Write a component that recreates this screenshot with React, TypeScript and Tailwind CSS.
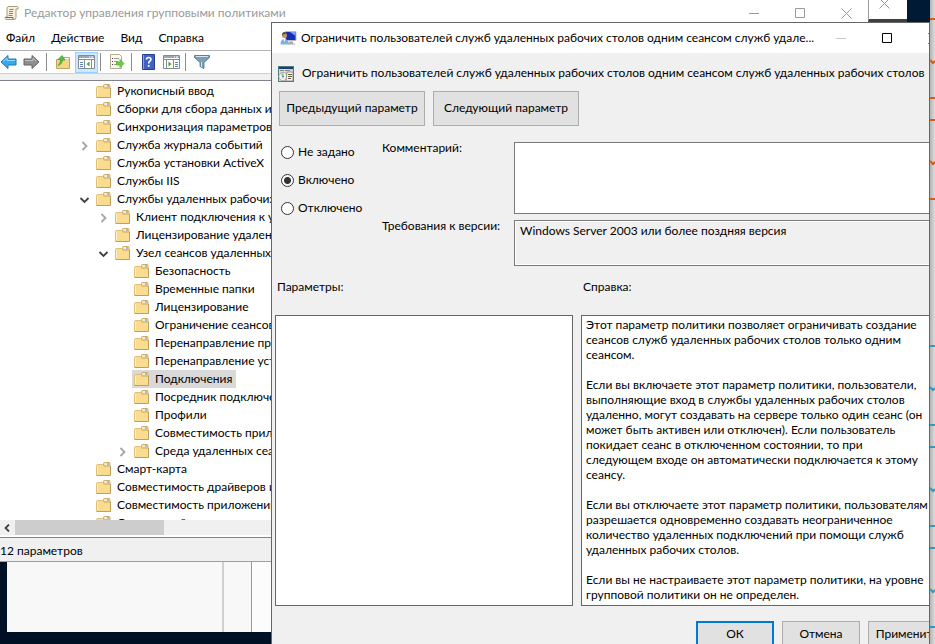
import React from "react";

type Node = {
  label: string;
  depth: 0 | 1 | 2;
  state?: "open" | "closed";
  selected?: boolean;
};

const NODES: Node[] = [
  { label: "Рукописный ввод", depth: 0 },
  { label: "Сборки для сбора данных и", depth: 0 },
  { label: "Синхронизация параметров", depth: 0 },
  { label: "Служба журнала событий", depth: 0, state: "closed" },
  { label: "Служба установки ActiveX", depth: 0 },
  { label: "Службы IIS", depth: 0 },
  { label: "Службы удаленных рабочих", depth: 0, state: "open" },
  { label: "Клиент подключения к у", depth: 1, state: "closed" },
  { label: "Лицензирование удаленных", depth: 1 },
  { label: "Узел сеансов удаленных", depth: 1, state: "open" },
  { label: "Безопасность", depth: 2 },
  { label: "Временные папки", depth: 2 },
  { label: "Лицензирование", depth: 2 },
  { label: "Ограничение сеансов", depth: 2 },
  { label: "Перенаправление принтеров", depth: 2 },
  { label: "Перенаправление устройств", depth: 2 },
  { label: "Подключения", depth: 2, selected: true },
  { label: "Посредник подключений", depth: 2 },
  { label: "Профили", depth: 2 },
  { label: "Совместимость приложений", depth: 2 },
  { label: "Среда удаленных сеансов", depth: 2, state: "closed" },
  { label: "Смарт-карта", depth: 0 },
  { label: "Совместимость драйверов и", depth: 0 },
  { label: "Совместимость приложений", depth: 0 },
  { label: "Совместный доступ к сети", depth: 0 },
];

const INDENT = ["pl-[78px]", "pl-[97px]", "pl-[116px]"];

const HELP_TEXT = `Этот параметр политики позволяет ограничивать создание
сеансов служб удаленных рабочих столов только одним
сеансом.

Если вы включаете этот параметр политики, пользователи,
выполняющие вход в службы удаленных рабочих столов
удаленно, могут создавать на сервере только один сеанс (он
может быть активен или отключен). Если пользователь
покидает сеанс в отключенном состоянии, то при
следующем входе он автоматически подключается к этому
сеансу.

Если вы отключаете этот параметр политики, пользователям
разрешается одновременно создавать неограниченное
количество удаленных подключений при помощи служб
удаленных рабочих столов.

Если вы не настраиваете этот параметр политики, на уровне
групповой политики он не определен.`;

function Folder() {
  return (
    <svg width="15" height="14" viewBox="0 0 15 14" className="shrink-0">
      <path d="M.5 13.500V3.500q0-1 1-1H6.500l1.500 1.500h5.500q1 0 1 1v8.500z" fill="#f9dc90" />
      <path d="M7.500 4V1.500q0-1 1-1h4.500q1 0 1 1V4z" fill="#f3ddab" stroke="#cdaa68" />
      <path d="M9 2h2" stroke="#fff" />
      <path d="M11 2h2" stroke="#5aa0dc" />
      <path d="M.5 13V3.500q0-1 1-1H6.500L8 4h5.500" fill="none" stroke="#e0bf78" />
      <path d="M1.500 12V4" stroke="#fff0c4" />
      <path d="M.5 13.500H14.500V4" fill="none" stroke="#bd9f60" />
    </svg>
  );
}

function Chevron({ state }: { state?: "open" | "closed" }) {
  return (
    <svg width="12" height="12" viewBox="0 0 12 12" className="mr-1.5 shrink-0">
      {state === "closed" && <path d="M4.500 3 8.500 7 4.500 11" fill="none" stroke="#a6a6a6" strokeWidth="1.800" />}
      {state === "open" && <path d="M2.500 5 6.500 9 10.500 5" fill="none" stroke="#404040" strokeWidth="1.800" />}
    </svg>
  );
}

function ScrollIcon() {
  return (
    <svg width="16" height="16" viewBox="0 0 16 16" className="shrink-0">
      <path d="M4 1.500h9.500q1.500 1 .5 2.500h-2v8.500q0 2-2 2h-8q-1.500-1-.5-2.500H3V3z" fill="#f6efd9" stroke="#a89c80" />
      <path d="M5.500 4.500h4M5 6.500h4M5 8.500h4M4.500 10.500h4" stroke="#8d8571" />
      <path d="M1.500 12.500h7.500v2" fill="none" stroke="#756c58" />
    </svg>
  );
}

function Arrow({ back }: { back?: boolean }) {
  return back ? (
    <svg width="17" height="16" viewBox="0 0 17 16">
      <path d="M1 8 8 1.500V5h8v6H8v3.500z" fill="#36a9ea" stroke="#1b7cba" strokeLinejoin="round" />
      <path d="M3 7.500 7 4v2.500h8" fill="none" stroke="#9adcff" />
    </svg>
  ) : (
    <svg width="17" height="16" viewBox="0 0 17 16">
      <path d="M16 8 9 1.500V5H1v6h8v3.500z" fill="#8f8f8f" stroke="#636363" strokeLinejoin="round" />
      <path d="M2 6.500h8V4l3 3" fill="none" stroke="#c4c4c4" />
    </svg>
  );
}

function UpFolder() {
  return (
    <svg width="16" height="16" viewBox="0 0 16 16">
      <path d="M1.500 14.500v-9H7l1-2h6.500v11z" fill="#f4d489" stroke="#c4a25c" />
      <path d="M9.500 4.500h4" stroke="#fff" />
      <path d="M3 11.500c3-1 4.500-3 4.500-5.500H10L7 1.500 3 5.500h2.500C5.500 8 4.500 10 3 11.500z" fill="#58c23c" stroke="#3c9a2c" strokeWidth=".7" />
    </svg>
  );
}

function PaneIcon({ left }: { left?: boolean }) {
  return (
    <svg width="17" height="14" viewBox="0 0 17 14">
      <path d="M.5.5h16v13H.5z" fill="#fff" stroke="#858b94" />
      <path d="M1 1h15v2H1z" fill="#9fa6b0" />
      <path d="M11 2h1M13 2h2" stroke="#fff" />
      <path d="M1 4.500h15" stroke="#858b94" />
      {left ? (
        <>
          <path d="M2 7.500h3M2 9.500h3M2 11.500h3" stroke="#5f86b4" />
          <path d="M6.500 5v8M13.500 5v8" stroke="#858b94" />
          <path d="M11.500 6.500v5L8.500 9z" fill="#3caa2c" />
        </>
      ) : (
        <>
          <path d="M12 7.500h3M12 9.500h3M12 11.500h3" stroke="#5f86b4" />
          <path d="M3.500 5v8M10.500 5v8" stroke="#858b94" />
          <path d="M5.500 6.500v5l3-2.500z" fill="#3caa2c" />
        </>
      )}
    </svg>
  );
}

function ExportIcon() {
  return (
    <svg width="16" height="16" viewBox="0 0 16 16">
      <path d="M1.500.5h9l2 2v12h-11z" fill="#fdf9ea" stroke="#b5ab90" />
      <path d="M3 4.500h1M3 7.500h1M3 10.500h1" stroke="#444" />
      <path d="M5 4.500h5M5 7.500h4M5 10.500h3" stroke="#9a96a8" />
      <path d="M7.500 8h3.500V5.500L15 9.500 11 13.500V11H7.500z" fill="#69ce45" stroke="#5bb03f" strokeWidth=".8" />
    </svg>
  );
}

function HelpIcon() {
  return (
    <svg width="13" height="16" viewBox="0 0 13 16">
      <path d="M.5.5h12v15H.5z" fill="#3f62c4" stroke="#27408c" />
      <path d="M1.500 1v14" stroke="#8aa2e6" />
      <path d="M4.500 5.500q0-2 2.200-2t2.200 1.900q0 1.200-1.200 1.900T6.700 9.500" fill="none" stroke="#fff" strokeWidth="1.600" />
      <path d="M5.800 11h1.800v1.800H5.800z" fill="#fff" />
    </svg>
  );
}

function FunnelIcon() {
  return (
    <svg width="16" height="16" viewBox="0 0 16 16">
      <path d="M.5 1.500h15v2l-5.500 5v6l-4-2V8.500L.5 3.500z" fill="#7ba0b5" stroke="#4d6f84" strokeWidth=".8" />
      <path d="M2 2.500h12" stroke="#d5e6ef" />
      <path d="M7.500 8v5" stroke="#cfe3ee" />
    </svg>
  );
}

function UserScreenIcon() {
  return (
    <svg width="17" height="16" viewBox="0 0 17 16" className="shrink-0">
      <path d="M5.500 1.500h10.500v9H5.500z" fill="#1230b8" stroke="#b9bdbd" />
      <path d="M10 2h5.500v4z" fill="#7b9cf0" />
      <path d="M9 11.500h4v2h2v1H8v-1h1z" fill="#a9adaa" />
      <circle cx="4.500" cy="5.500" r="2.500" fill="#c09468" />
      <path d="M2 5.500q-.2-3.500 2.500-3.500 2.300 0 2.500 2Q4 3.300 2 5.500z" fill="#5c4838" />
      <path d="M.5 14.500q0-5.500 4-5.500t4.500 5.500z" fill="#7fb2d8" />
      <path d="M3.500 9h2l-1 3z" fill="#fff" />
    </svg>
  );
}

function PolicyIcon() {
  return (
    <svg width="16" height="16" viewBox="0 0 16 16" className="shrink-0">
      <path d="M0 0h16v16H0z" fill="#4c7c82" />
      <path d="M1 1h14v2H1z" fill="#15407c" />
      <path d="M1 3h14v12H1z" fill="#dcdcd6" />
      <path d="M2 4.500h4M7 4.500h5" stroke="#888" />
      <path d="M12 3.500h3" stroke="#e8c63c" />
      <circle cx="5" cy="10.500" r="4.200" fill="#eef0ee" stroke="#8c9494" strokeWidth=".7" />
      <path d="M5 10.500 2.500 7.500h3z" fill="#84c45c" />
      <circle cx="5" cy="10.500" r="1" fill="#777" />
      <path d="M9 6h6v9H8z" fill="#f6f2dd" stroke="#777" strokeWidth=".7" />
      <path d="M10 8.500h4M10 10.500h4M10 12.500h3" stroke="#67604f" />
    </svg>
  );
}

function Minimize() {
  return (
    <svg width="11" height="11" viewBox="0 0 11 11">
      <path d="M0 5.500h10" stroke="currentColor" />
    </svg>
  );
}
function Maximize() {
  return (
    <svg width="11" height="11" viewBox="0 0 11 11">
      <path d="M.5.5h9v9h-9z" fill="none" stroke="currentColor" />
    </svg>
  );
}
function Close() {
  return (
    <svg width="11" height="11" viewBox="0 0 11 11">
      <path d="m.5.5 10 10m0-10-10 10" stroke="currentColor" />
    </svg>
  );
}

function Separator() {
  return <span className="h-[18px] w-px bg-[#8c8c8c]" />;
}

function EditorWindow() {
  return (
    <section className="absolute top-0 right-[67px] left-0 flex h-[562px] flex-col border-b border-[#a0a0a0] bg-white">
      <header className="flex h-[26px] items-center pl-1">
        <ScrollIcon />
        <h1 className="ml-1 flex-1 text-[#999999]">Редактор управления групповыми политиками</h1>
        <div className="flex gap-[35px] pr-4 text-[#999999]">
          <button aria-label="Свернуть"><Minimize /></button>
          <button aria-label="Развернуть"><Maximize /></button>
          <button aria-label="Закрыть"><Close /></button>
        </div>
      </header>
      <nav className="flex h-[25px] items-center gap-4 border-b border-[#b4b4b4] pl-1.5">
        <button>Файл</button>
        <button>Действие</button>
        <button>Вид</button>
        <button>Справка</button>
      </nav>
      <div className="flex h-[22px] items-center">
        <button aria-label="Назад"><Arrow back /></button>
        <button aria-label="Вперед" className="mx-1.5"><Arrow /></button>
        <Separator />
        <button aria-label="Вверх" className="mr-1 ml-2"><UpFolder /></button>
        <button aria-label="Дерево консоли" className="mr-0.5 grid h-[21px] w-[23px] place-items-center border border-[#99d1ff] bg-[#cce8ff]"><PaneIcon left /></button>
        <Separator />
        <button aria-label="Экспорт списка" className="mr-1.5 ml-2"><ExportIcon /></button>
        <Separator />
        <button aria-label="Справка" className="mr-2 ml-2.5"><HelpIcon /></button>
        <button aria-label="Область действий" className="mr-[5px]"><PaneIcon /></button>
        <Separator />
        <button aria-label="Фильтр" className="ml-2"><FunnelIcon /></button>
      </div>
      <div className="h-2 border-t border-b border-t-[#d0d0d0] border-b-[#82828c] bg-[#f0f0f0]" />
      <ul className="min-h-0 flex-1 overflow-hidden pt-px">
        {NODES.map((n, i) => (
          <li key={i} className={`flex h-[18px] items-center ${INDENT[n.depth]}`}>
            <Chevron state={n.state} />
            <span className={`flex h-[18px] items-center gap-1.5 pr-1 whitespace-nowrap ${n.selected ? "-ml-0.5 bg-[#d9d9d9] pl-0.5" : ""}`}>
              <Folder />
              <span>{n.label}</span>
            </span>
          </li>
        ))}
      </ul>
      <div className="flex h-[15px] items-stretch bg-[#f0f0f0]">
        <button aria-label="Прокрутить влево" className="grid w-[15px] place-items-center">
          <svg width="10" height="8" viewBox="0 0 10 8">
            <path d="M6 .5 2.500 4 6 7.500" fill="none" stroke="#404040" strokeWidth="1.800" />
          </svg>
        </button>
        <span className="w-[149px] bg-[#cdcdcd]" />
      </div>
      <div className="mt-0.5 flex h-6 items-center border-t border-[#82828c] bg-[#f0f0f0] pt-0.5">
        12 параметров
      </div>
    </section>
  );
}

function RadioRow({ label, checked }: { label: string; checked?: boolean }) {
  return (
    <label className="flex h-7 items-center gap-1">
      <input
        type="radio"
        name="policy-state"
        defaultChecked={checked}
        className="size-[13px] appearance-none rounded-full border border-[#333333] bg-white checked:bg-[radial-gradient(circle,#333333_3px,#ffffff_4px)]"
      />
      {label}
    </label>
  );
}

const DIALOG_BUTTON = "h-[29px] w-[78px] border border-[#adadad] bg-[#e1e1e1] pb-1";

function PolicyDialog() {
  return (
    <section className="absolute top-[22px] right-[5px] bottom-0 left-[271px] overflow-hidden border-t border-r border-l border-[#666666] bg-[#f0f0f0]">
      <div className="-mr-[17px]">
        <header className="flex h-[30px] items-center bg-white pl-2">
          <UserScreenIcon />
          <h2 className="ml-1 min-w-0 flex-1 whitespace-nowrap">
            Ограничить пользователей служб удаленных рабочих столов одним сеансом служб удале...
          </h2>
          <div className="flex gap-[35px] pr-[7px]">
            <button aria-label="Свернуть окно" className="text-[#c8c8c8]"><Minimize /></button>
            <button aria-label="Развернуть окно"><Maximize /></button>
            <button aria-label="Закрыть окно"><Close /></button>
          </div>
        </header>
        <div className="flex h-[38px] items-center gap-2 pt-1 pl-1.5 whitespace-nowrap">
          <PolicyIcon />
          <p className="mb-0.5">Ограничить пользователей служб удаленных рабочих столов одним сеансом служб удаленных рабочих столов</p>
        </div>
        <div className="flex gap-2 pl-[7px]">
          <button className="h-[35px] w-[146px] border border-[#adadad] bg-[#e1e1e1] pb-0.5">Предыдущий параметр</button>
          <button className="h-[35px] w-[146px] border border-[#adadad] bg-[#e1e1e1] pb-0.5">Следующий параметр</button>
        </div>
        <div className="grid grid-cols-[101px_132px_1fr] pt-4 pl-[9px]">
          <fieldset className="-mt-1 row-span-2">
            <RadioRow label="Не задано" />
            <RadioRow label="Включено" checked />
            <RadioRow label="Отключено" />
          </fieldset>
          <label htmlFor="comment" className="-mt-0.5">Комментарий:</label>
          <textarea id="comment" className="block h-[72px] w-full resize-none border border-[#7a7a7a] bg-white" />
          <label htmlFor="support" className="mt-1">Требования к версии:</label>
          <textarea
            id="support"
            readOnly
            defaultValue="Windows Server 2003 или более поздняя версия"
            className="mt-1.5 block h-[46px] w-full resize-none border border-[#7a7a7a] bg-[#f0f0f0] px-[5px] py-0.5 shadow-[inset_0_0_0_1px_#ffffff]"
          />
        </div>
        <div className="grid grid-cols-[298px_1fr] gap-x-2 gap-y-5 pt-[13px] pl-[3px]">
          <label htmlFor="options" className="pl-0.5">Параметры:</label>
          <label htmlFor="help" className="pl-0.5">Справка:</label>
          <textarea id="options" readOnly className="block h-[291px] w-full resize-none border border-[#666666] bg-white" />
          <textarea
            id="help"
            readOnly
            defaultValue={HELP_TEXT}
            className="block h-[291px] w-full resize-none overflow-hidden border border-[#666666] bg-white px-1 py-px leading-[15px] whitespace-pre"
          />
        </div>
        <footer className="flex justify-end gap-2 pt-[15px]">
          <button className="h-[29px] w-[78px] border-2 border-[#0078d7] bg-[#e1e1e1] pb-1">ОК</button>
          <button className={DIALOG_BUTTON}>Отмена</button>
          <button className={DIALOG_BUTTON}>Применить</button>
        </footer>
      </div>
    </section>
  );
}

/* Sparkline edges of the monitoring tiles that show past the dialog. */
function MonitorStrip() {
  return (
    <aside className="absolute inset-y-0 right-0 w-[5px] bg-gradient-to-r from-[#b4b4b4] to-[#dddddd]">
      <svg width="5" height="644" viewBox="0 0 5 644" fill="none" strokeWidth="2">
        <path d="M0 19h5M0 98h5M0 120h5M0 199h5M0 60l3 3 2-2M0 161l3 3 2-2" stroke="#dc5a0a" />
        <path d="M0 346h5M0 425h5M0 447h5M0 526h5M0 548h5M0 627h5M0 387l3 3 2-2M0 488l3 3 2-2M0 589l3 3 2-2" stroke="#2c9cc0" />
      </svg>
    </aside>
  );
}

export default function App() {
  return (
    <main className="relative h-screen min-h-[644px] w-full overflow-hidden bg-gradient-to-t from-[#001024] to-[#001a36] font-['Lato','Noto_Sans',sans-serif] text-[12px] leading-4 text-black">
      <section className="absolute top-[540px] right-[67px] left-[7px] flex h-[92px] bg-[#fcfcfc]">
        <div className="w-[217px] border-r-2 border-[#d0d0d0] bg-[#f8f8f8]" />
        <div className="w-7 border-r border-[#999999] bg-[#f8f8f8]" />
      </section>
      <EditorWindow />
      <section className="absolute top-0 right-7 flex h-[22px] w-[39px] justify-center border-b-[3px] border-l border-b-[#404040] border-l-[#999999] bg-white text-[#999999]">
        <button aria-label="Закрыть фоновое окно" className="-mt-3 -ml-2"><Close /></button>
      </section>
      <MonitorStrip />
      <PolicyDialog />
    </main>
  );
}
